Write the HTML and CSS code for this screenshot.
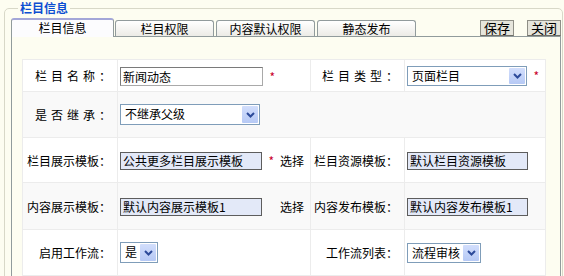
FILE: index.html
```html
<!DOCTYPE html>
<html lang="zh-CN">
<head>
  <meta charset="UTF-8">
  <title>栏目信息</title>
  <link rel="stylesheet" href="styles.css">
</head>
<body>

  <fieldset class="box">
    <legend class="box-title">栏目信息</legend>

    <div class="tabbar">
      <div class="tab active">栏目信息</div>
      <div class="tab">栏目权限</div>
      <div class="tab">内容默认权限</div>
      <div class="tab">静态发布</div>
      <div class="tools">
        <button class="btn">保存</button>
        <button class="btn">关闭</button>
      </div>
    </div>

    <div class="panel">
      <table class="form">
        <colgroup>
          <col class="c-label">
          <col class="c-field">
          <col class="c-label2">
          <col class="c-field2">
        </colgroup>
        <tr class="r1">
          <th class="spaced">栏目名称：</th>
          <td><span class="text">新闻动态</span><span class="star">*</span></td>
          <th class="spaced">栏目类型：</th>
          <td>
            <span class="select w-type"><span class="val">页面栏目</span><span class="arrow"><svg viewBox="0 0 9 6" width="9" height="6"><path d="M1 1l3.5 3.5L8 1" fill="none" stroke="#2c4a9a" stroke-width="2"/></svg></span></span><span class="star">*</span>
          </td>
        </tr>
        <tr class="r2 alt">
          <th class="spaced">是否继承：</th>
          <td colspan="3"><span class="select w-inherit"><span class="val">不继承父级</span><span class="arrow"><svg viewBox="0 0 9 6" width="9" height="6"><path d="M1 1l3.5 3.5L8 1" fill="none" stroke="#2c4a9a" stroke-width="2"/></svg></span></span></td>
        </tr>
        <tr class="r3">
          <th>栏目展示模板：</th>
          <td><span class="text tpl">公共更多栏目展示模板</span><span class="star">*</span><span class="pick">选择</span></td>
          <th>栏目资源模板：</th>
          <td><span class="text tpl w-res">默认栏目资源模板</span></td>
        </tr>
        <tr class="r4 alt">
          <th>内容展示模板：</th>
          <td><span class="text tpl">默认内容展示模板1</span><span class="star blank">*</span><span class="pick">选择</span></td>
          <th>内容发布模板：</th>
          <td><span class="text tpl w-res">默认内容发布模板1</span></td>
        </tr>
        <tr class="r5">
          <th>启用工作流：</th>
          <td><span class="select w-yes"><span class="val">是</span><span class="arrow"><svg viewBox="0 0 9 6" width="9" height="6"><path d="M1 1l3.5 3.5L8 1" fill="none" stroke="#2c4a9a" stroke-width="2"/></svg></span></span></td>
          <th>工作流列表：</th>
          <td><span class="select w-flow"><span class="val">流程审核</span><span class="arrow"><svg viewBox="0 0 9 6" width="9" height="6"><path d="M1 1l3.5 3.5L8 1" fill="none" stroke="#2c4a9a" stroke-width="2"/></svg></span></span></td>
        </tr>
      </table>
    </div>
  </fieldset>

</body>
</html>
```

FILE: styles.css
```css
html, body {
  height: 276px;
  overflow: hidden;
}

body {
  margin: 0;
  background: #fdfdf1;
  font-family: "Noto Sans CJK SC", "Liberation Sans", sans-serif;
  font-size: 12px;
  color: #000;
}

.box {
  margin: 0 1px 0 4px;
  padding: 3px 1px 0 6px;
  border: 1px solid #d8d8c8;
  border-radius: 5px;
  min-width: 0;
  height: 290px;
}

.box-title {
  margin-left: 7px;
  padding: 0 2px;
  font-size: 12px;
  line-height: 16px;
  font-weight: bold;
  color: #0c4ed2;
}

/* tabs */
.tabbar {
  display: flex;
  align-items: flex-end;
  height: 17px;
  border-bottom: 1px solid #919b9c;
}

.tab {
  height: 15px;
  margin-right: 2px;
  width: 97px;
  border: 1px solid #919b9c;
  border-bottom: none;
  border-radius: 3px 3px 0 0;
  background: linear-gradient(#ffffff, #ecebe6);
  text-align: center;
  line-height: 16px;
}

.tab.active {
  width: 101px;
  height: 17px;
  margin-bottom: -1px;
  margin-right: 1px;
  border-top: 2px solid #a3a6d8;
  background: #fcfcfe;
  line-height: 15px;
}

.tools {
  margin-left: auto;
  display: flex;
  gap: 13px;
  align-self: flex-start;
  margin-top: 1px;
}

.btn {
  height: 16px;
  width: 34px;
  padding: 0;
  border: 1px solid #8e8e86;
  border-bottom-color: #6f6f68;
  background: #e6e5dc;
  font-family: inherit;
  font-size: 13px;
  line-height: 14px;
}

/* panel */
.panel {
  border-left: 1px solid #919b9c;
  border-right: 1px solid #919b9c;
  padding: 22px 0 0 10px;
  height: 240px;
}

.form {
  width: 523px;
  border-collapse: collapse;
  background: #fff;
  table-layout: fixed;
}

.c-label { width: 95px; }
.c-field { width: 193px; }
.c-label2 { width: 94px; }
.c-field2 { width: 141px; }

.form th,
.form td {
  border: 1px solid #ececec;
  padding: 0;
  white-space: nowrap;
}

.form th {
  font-weight: normal;
  text-align: right;
  padding-right: 6px;
}

.form td {
  padding-left: 2px;
}

.form th.spaced {
  letter-spacing: 4px;
  padding-right: 2px;
}

.form tr.alt th,
.form tr.alt td {
  background: #f9f9f9;
}

.r1 { height: 32px; }
.r2 { height: 46px; }
.r3 { height: 45px; }
.r4 { height: 47px; }
.r5 { height: 46px; }

/* fields */
.text {
  display: inline-block;
  vertical-align: middle;
  box-sizing: border-box;
  width: 143px;
  height: 19px;
  padding-left: 2px;
  border: 1px solid #7a7a7a;
  border-right-color: #a9a9a9;
  border-bottom-color: #a9a9a9;
  background: #fff;
  line-height: 17px;
}

.text.tpl {
  width: 142px;
  height: 18px;
  line-height: 16px;
  background: #e3e9f8;
  border-color: #5d5d5d;
}

.text.w-res {
  width: 121px;
}

.star {
  display: inline-block;
  vertical-align: middle;
  width: 12px;
  text-align: right;
  color: #c8002a;
}

.star.blank {
  visibility: hidden;
}

.pick {
  display: inline-block;
  vertical-align: middle;
  margin-left: 6px;
}

.select {
  display: inline-flex;
  vertical-align: middle;
  box-sizing: border-box;
  height: 20px;
  border: 1px solid #7f9db9;
  background: #fff;
}

.select .val {
  flex: 1;
  padding-left: 4px;
  line-height: 18px;
}

.select .arrow {
  width: 16px;
  margin: 1px;
  display: flex;
  align-items: center;
  justify-content: center;
  background: linear-gradient(#d2defc, #b6c9f5);
  border-radius: 1px;
}

.w-type { width: 120px; }
.w-inherit { width: 140px; height: 21px; }
.w-yes { width: 38px; height: 21px; }
.w-flow { width: 74px; }
```
